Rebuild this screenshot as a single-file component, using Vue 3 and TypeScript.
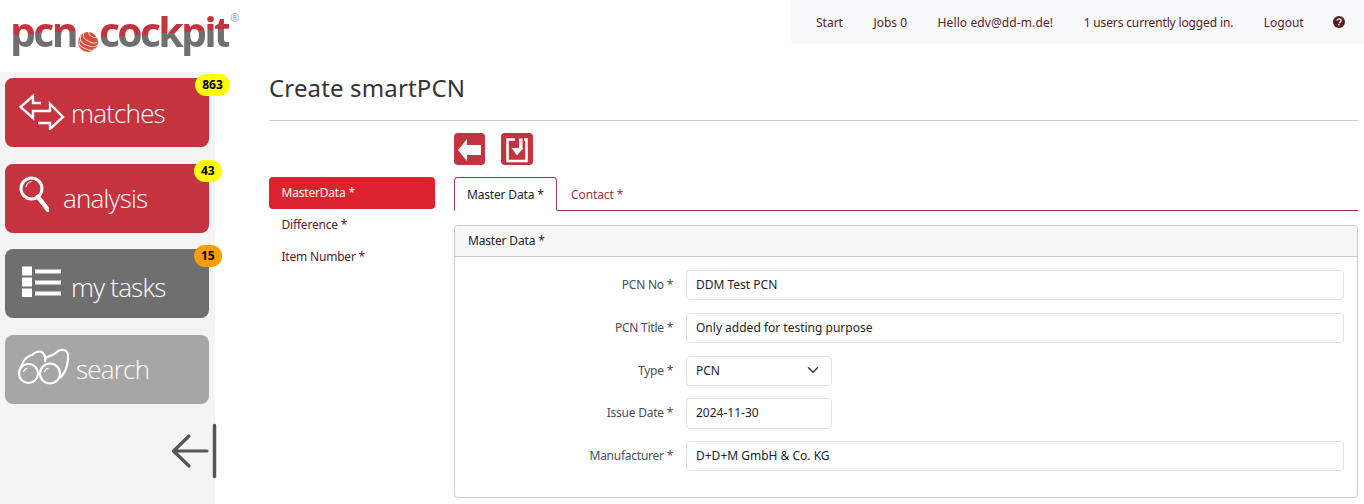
<template>
  <div class="page">
    <header class="top">
      <div class="logo">
        <span class="logo-word">pcn</span>
        <svg class="logo-ball" viewBox="0 0 20 20">
          <circle cx="10" cy="10" r="10" fill="#d9483b" />
          <path d="M6 1c-2 4 0 6 4 8s8 3 9 1M3 3C1 8 3 11 8 13s9 3 11 0M1 8c-1 5 2 7 7 9s7 2 9-1M11 0c-1 2 1 4 4 5s4 1 4 0" fill="none" stroke="#f6cfc6" stroke-width="1.100" />
        </svg>
        <span class="logo-word">cockpit</span>
        <span class="logo-reg">®</span>
      </div>
      <nav class="top-nav">
        <a v-for="item in topLinks" :key="item">{{ item }}</a>
        <svg class="help" viewBox="0 0 16 16">
          <circle cx="8" cy="8" r="8" fill="#5a1a1f" />
          <path d="M5.300 6.200C5.500 4.600 6.600 3.800 8.100 3.800c1.600 0 2.700 1 2.700 2.300 0 1.100-.6 1.600-1.300 2.100-.7.500-.9.800-.9 1.400" fill="none" stroke="#fff" stroke-width="1.900" />
          <rect x="6.700" y="10.600" width="2" height="2" fill="#fff" />
        </svg>
      </nav>
    </header>

    <div class="body">
      <aside class="sidebar">
        <div v-for="tile in tiles" :key="tile.label" class="tile" :class="'tile--' + tile.kind">
          <svg v-if="tile.icon === 'arrows'" class="tile-icon icon-arrows" viewBox="0 0 46 36">
            <path d="M22 9H14V2L1.500 13 14 24V17H31V10L44 23 31 35V29H19" fill="none" stroke="#fff" stroke-width="2.400" stroke-linejoin="miter" />
          </svg>
          <svg v-else-if="tile.icon === 'lens'" class="tile-icon icon-lens" viewBox="0 0 30 36">
            <circle cx="12.500" cy="12.500" r="10.500" fill="none" stroke="#fff" stroke-width="3" />
            <path d="M19 21 29 34" stroke="#fff" stroke-width="4.500" stroke-linecap="round" />
            <path d="M7 11c.5-3 2.500-5 5.500-5.500" fill="none" stroke="#fff" stroke-width="1.200" />
          </svg>
          <svg v-else-if="tile.icon === 'list'" class="tile-icon icon-list" viewBox="0 0 40 30">
            <path d="M0 0h10v9H0zM0 11h10v9H0zM0 22h10v9H0zM13 3h26v4H13zM13 14h26v4H13zM13 25h26v4H13z" fill="#fff" />
          </svg>
          <svg v-else class="tile-icon icon-glass" viewBox="0 0 51 38">
            <circle cx="10.500" cy="25.500" r="9.500" fill="none" stroke="#fff" stroke-width="2.200" />
            <circle cx="32" cy="25.500" r="10" fill="none" stroke="#fff" stroke-width="2.200" />
            <path d="M2.500 20C5 13 8 8 14 7 17 4 23 2 25 5c1.500 2 3 5 2 9" fill="none" stroke="#fff" stroke-width="2.200" />
            <path d="M27 10c4-2 9-3 12-6 3-3 8-3 10 0 2 3 1 9 0 13-1 5-4 10-7 13" fill="none" stroke="#fff" stroke-width="2.200" />
            <path d="M5.500 24c.5-2 2-3.500 4-4M26.500 24c.5-2 2-3.500 4-4" fill="none" stroke="#fff" stroke-width="1.100" />
          </svg>
          <span class="tile-label" :class="'label-' + tile.icon">{{ tile.label }}</span>
          <span v-if="tile.count" class="badge" :class="{ 'badge--orange': tile.kind === 'grey' }">{{ tile.count }}</span>
        </div>
        <div class="collapse">
          <svg viewBox="0 0 46 54" class="collapse-icon">
            <path d="M43.500 1.500v51" stroke="#555" stroke-width="3.500" stroke-linecap="round" />
            <path d="M36 27H2.500M18 12 2.500 27 18 42" fill="none" stroke="#555" stroke-width="3.200" stroke-linecap="round" stroke-linejoin="round" />
          </svg>
        </div>
      </aside>

      <main class="main">
        <h1>Create smartPCN</h1>
        <hr />
        <div class="content">
          <ul class="side-menu">
            <li class="active">MasterData *</li>
            <li>Difference *</li>
            <li>Item Number *</li>
          </ul>
          <div class="editor">
            <div class="actions">
              <button class="act">
                <svg viewBox="0 0 31 32"><path d="M4 17 13 6v6h14v10H13v6z" fill="#fff" /></svg>
              </button>
              <button class="act act-save">
                <svg viewBox="0 0 32 32">
                  <path d="M14 6.500H6.500V28H25.500V6.500H23" fill="none" stroke="#fff" stroke-width="2.600" />
                  <path d="M18 5.500h3.500V15h1L16 22.500 10.500 15H18z" fill="#fff" />
                </svg>
              </button>
            </div>
            <div class="tabs">
              <span class="tab tab--active">Master Data *</span>
              <span class="tab">Contact *</span>
            </div>
            <section class="card">
              <div class="card-head">Master Data *</div>
              <div class="card-body">
                <div v-for="row in rows" :key="row.label" class="row">
                  <label>{{ row.label }}</label>
                  <div class="field" :class="{ 'field--short': row.short }">
                    <span>{{ row.value }}</span>
                    <svg v-if="row.select" class="chevron" viewBox="0 0 16 16">
                      <path d="M2 5l6 6 6-6" fill="none" stroke="#343a40" stroke-width="2" stroke-linecap="round" stroke-linejoin="round" />
                    </svg>
                  </div>
                </div>
              </div>
            </section>
          </div>
        </div>
      </main>
    </div>
  </div>
</template>

<script setup lang="ts">
interface Tile {
  label: string
  icon: string
  kind: string
  count?: number
}

interface Row {
  label: string
  value: string
  short?: boolean
  select?: boolean
}

const topLinks = ['Start', 'Jobs 0', 'Hello edv@dd-m.de!', '1 users currently logged in.', 'Logout']

const tiles: Tile[] = [
  { label: 'matches', icon: 'arrows', kind: 'red', count: 863 },
  { label: 'analysis', icon: 'lens', kind: 'red', count: 43 },
  { label: 'my tasks', icon: 'list', kind: 'grey', count: 15 },
  { label: 'search', icon: 'glass', kind: 'light' },
]

const rows: Row[] = [
  { label: 'PCN No *', value: 'DDM Test PCN' },
  { label: 'PCN Title *', value: 'Only added for testing purpose' },
  { label: 'Type *', value: 'PCN', short: true, select: true },
  { label: 'Issue Date *', value: '2024-11-30', short: true },
  { label: 'Manufacturer *', value: 'D+D+M GmbH & Co. KG' },
]
</script>

<style>
html,
body {
  margin: 0;
  background: #fff;
  overflow: hidden;
}
</style>

<style scoped>
.page {
  width: 1364px;
  height: 504px;
  overflow: hidden;
  font-family: "Noto Sans", "Open Sans", sans-serif;
  font-size: 12px;
  color: #212529;
}

.top {
  display: flex;
  justify-content: space-between;
  height: 72px;
}

.logo {
  display: flex;
  align-items: flex-start;
  padding: 6px 0 0 10px;
  height: 50px;
}

.logo-word {
  font-family: "Open Sans", sans-serif;
  font-size: 41px;
  font-weight: 700;
  line-height: 50px;
  letter-spacing: -2.700px;
  color: transparent;
  background: linear-gradient(176deg, #c5333f 0 54%, #6f6f6f 54% 100%);
  background-clip: text;
  -webkit-background-clip: text;
}

.logo-ball {
  width: 20px;
  height: 20px;
  margin: 26px 1px 0 2px;
}

.logo-reg {
  font-size: 11px;
  line-height: 12px;
  color: #999;
  margin: 6px 0 0 1px;
}

.top-nav {
  display: flex;
  align-items: center;
  width: 573px;
  height: 44px;
  box-sizing: border-box;
  padding-left: 25px;
  background: #f8f9fa;
  color: #5a1a1f;
}

.top-nav a {
  margin-right: 30.500px;
  white-space: nowrap;
}

.top-nav a:nth-child(3) {
  letter-spacing: 0.1px;
}

.top-nav a:nth-child(4) {
  letter-spacing: -0.14px;
}

.help {
  width: 12px;
  height: 12px;
  margin-left: -1px;
}

.body {
  display: flex;
  height: 432px;
}

.sidebar {
  width: 215px;
  height: 432px;
  flex-shrink: 0;
  box-sizing: border-box;
  padding: 6px 6px 0 5px;
  background: #f4f4f4;
  display: flex;
  flex-direction: column;
  gap: 16.500px;
}

.tile {
  position: relative;
  display: flex;
  align-items: center;
  height: 69px;
  flex-shrink: 0;
  border-radius: 8px;
  color: #fff;
  font-family: "Open Sans", sans-serif;
  font-size: 26px;
  font-weight: 300;
}

.tile--red {
  background: #c5333f;
}

.tile--grey {
  background: #6f6f6f;
}

.tile--light {
  background: #a6a6a6;
}

.tile-icon {
  flex-shrink: 0;
}

.icon-arrows {
  width: 46px;
  height: 36px;
  margin: -1px 0 0 14px;
}

.icon-lens {
  width: 30px;
  height: 36px;
  margin: -8px 0 0 14px;
}

.icon-list {
  width: 40px;
  height: 31px;
  margin: -5px 0 0 17px;
}

.icon-glass {
  width: 51px;
  height: 38px;
  margin: -5px 0 0 13px;
}

.tile-label {
  letter-spacing: -0.8px;
  line-height: 32px;
}

.label-arrows {
  margin-left: 6px;
}

.label-lens {
  margin-left: 14px;
}

.label-list {
  margin: 7px 0 0 9px;
}

.label-glass {
  margin-left: 7px;
}

.badge {
  position: absolute;
  top: -4px;
  right: -21px;
  min-width: 14px;
  height: 22px;
  padding: 0 7.250px;
  border-radius: 11px;
  background: #ffff00;
  color: #000;
  font-family: "Noto Sans", sans-serif;
  font-size: 12px;
  font-weight: 700;
  line-height: 22px;
  text-align: center;
}

.tile:nth-child(2) .badge,
.badge--orange {
  right: -13px;
}

.badge--orange {
  background: #ff9c00;
}

.collapse {
  display: flex;
  justify-content: flex-end;
  margin-top: 4px;
}

.collapse-icon {
  width: 46px;
  height: 54px;
  margin-right: -8px;
  overflow: visible;
}

.main {
  flex: 1;
  min-width: 0;
  padding: 0 6px 0 54px;
}

h1 {
  margin: 0;
  height: 48px;
  font-size: 24px;
  font-weight: 400;
  line-height: 32px;
  letter-spacing: 0.15px;
  color: #333;
}

hr {
  margin: 0;
  border: 0;
  border-top: 1px solid #ccc;
}

.content {
  display: flex;
  gap: 19px;
}

.side-menu {
  width: 166px;
  margin: 56px 0 0;
  padding: 0;
  list-style: none;
  color: #5a1a1f;
  letter-spacing: -0.2px;
}

.side-menu li {
  height: 32px;
  padding-left: 12.500px;
  line-height: 32px;
  border-radius: 4px;
}

.side-menu .active {
  background: #dc232d;
  color: #fff;
}

.editor {
  flex: 1;
  min-width: 0;
}

.actions {
  display: flex;
  gap: 16px;
  padding-top: 12px;
}

.act {
  width: 31px;
  height: 32px;
  padding: 0;
  border: 0;
  border-radius: 4px;
  background: #c5333f;
}

.act-save {
  width: 32px;
}

.act svg {
  display: block;
  width: 100%;
  height: 100%;
}

.tabs {
  display: flex;
  height: 33px;
  margin-top: 12px;
  border-bottom: 1px solid #953a42;
}

.tab {
  height: 33px;
  padding: 0 14px;
  line-height: 35px;
  color: #953a42;
  white-space: nowrap;
  letter-spacing: -0.1px;
}

.tab--active {
  box-sizing: border-box;
  height: 34px;
  width: 103px;
  padding: 0 12px;
  border: 1px solid #953a42;
  border-bottom-color: #fff;
  border-radius: 4px 4px 0 0;
  background: #fff;
  color: #212529;
  line-height: 33px;
  letter-spacing: -0.17px;
}

.card {
  margin-top: 14px;
  height: 273px;
  box-sizing: border-box;
  border: 1px solid #ccc;
  border-radius: 4px;
}

.card-head {
  height: 31px;
  box-sizing: border-box;
  padding-left: 13px;
  line-height: 30px;
  background: #f7f7f7;
  border-bottom: 1px solid #ccc;
  border-radius: 4px 4px 0 0;
  letter-spacing: -0.17px;
}

.card-body {
  display: flex;
  flex-direction: column;
  gap: 12.500px;
  padding: 13px 13px 0 0;
}

.row {
  display: flex;
  align-items: center;
  height: 30.250px;
}

.row label {
  width: 218px;
  flex-shrink: 0;
  padding-bottom: 1px;
  text-align: right;
  color: #495057;
  letter-spacing: -0.25px;
}

.field {
  flex: 1;
  height: 100%;
  box-sizing: border-box;
  margin-left: 13px;
  padding: 0 9px 1px;
  display: flex;
  align-items: center;
  justify-content: space-between;
  border: 1px solid #dee2e6;
  border-radius: 4px;
  background: #fff;
}

.field--short {
  flex: 0 0 146px;
}

.chevron {
  width: 12px;
  height: 12px;
  margin-right: 3px;
}
</style>
